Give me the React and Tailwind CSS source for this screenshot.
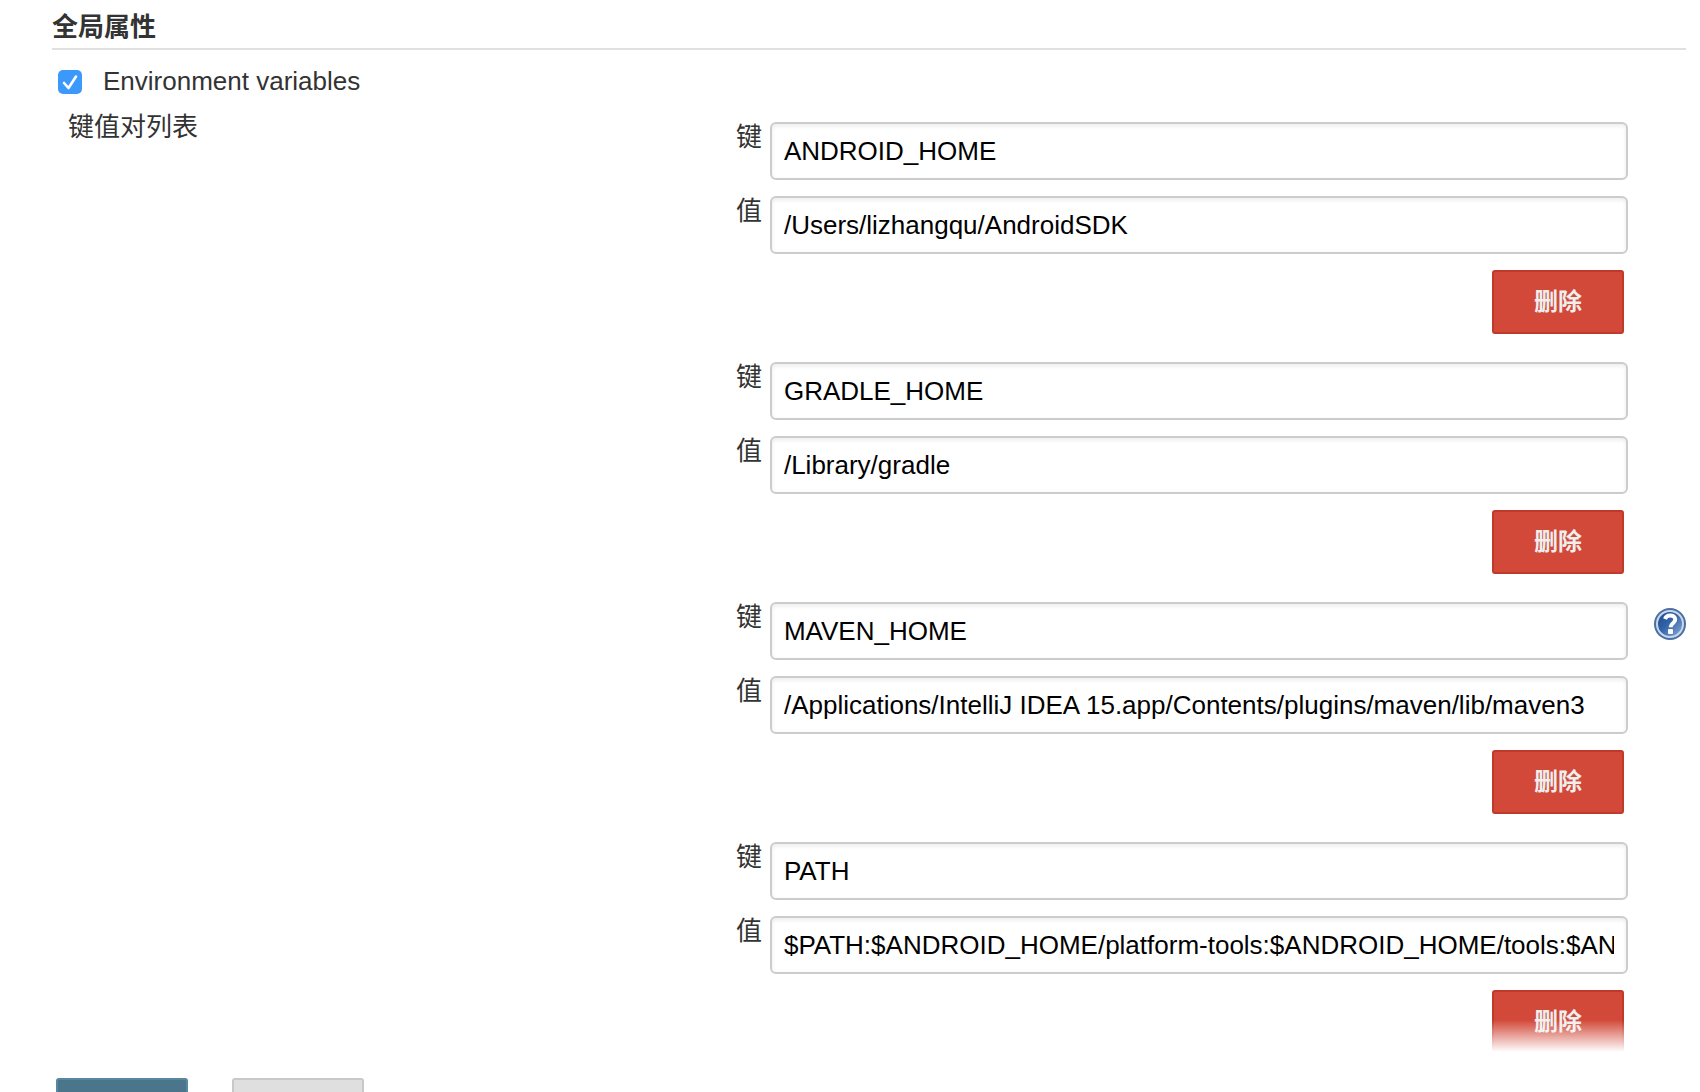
const variables = [
  { key: 'ANDROID_HOME', value: '/Users/lizhangqu/AndroidSDK' },
  { key: 'GRADLE_HOME', value: '/Library/gradle' },
  { key: 'MAVEN_HOME', value: '/Applications/IntelliJ IDEA 15.app/Contents/plugins/maven/lib/maven3' },
  { key: 'PATH', value: '$PATH:$ANDROID_HOME/platform-tools:$ANDROID_HOME/tools:$AN' },
]

function Field({ id, label, value }) {
  return (
    <div className="flex items-start gap-2">
      <label htmlFor={id} className="w-[26px] shrink-0 leading-[30px]">
        {label}
      </label>
      <input
        id={id}
        type="text"
        defaultValue={value}
        className="h-[58px] min-w-0 flex-1 rounded-[6px] border-2 border-[#ccc] bg-white px-3 text-black shadow-[inset_0_2px_4px_rgba(0,0,0,0.08)] outline-none"
      />
    </div>
  )
}

function VariableGroup({ item, index }) {
  return (
    <div className="flex flex-col gap-4 pb-7">
      <Field id={`key-${index}`} label="键" value={item.key} />
      <Field id={`value-${index}`} label="值" value={item.value} />
      <button
        type="button"
        className="mr-1 h-16 w-[132px] self-end rounded-[3px] border-2 border-[#c03a2b] bg-[#d24939] text-[24px] font-bold text-[#eee]"
      >
        删除
      </button>
    </div>
  )
}

function HelpIcon() {
  return (
    <svg viewBox="0 0 32 32" className="size-8" aria-hidden="true">
      <defs>
        <linearGradient id="help-fill" x1="0" y1="0" x2="1" y2="1">
          <stop offset="0" stopColor="#204a87" />
          <stop offset="0.45" stopColor="#3163a8" />
          <stop offset="1" stopColor="#8fb0da" />
        </linearGradient>
      </defs>
      <circle cx="16" cy="16" r="16" fill="#4a6fa5" />
      <circle cx="16" cy="16" r="13" fill="url(#help-fill)" stroke="#c9d7ea" strokeWidth="2" />
      <path
        d="M11 11c.8-2.400 2.700-3.400 5.200-3.400 3 0 5 1.500 5 4 0 3.600-4.600 3.700-4.600 7.600"
        fill="none"
        stroke="#fff"
        strokeWidth="4"
      />
      <rect x="14" y="21" width="5" height="5" rx="1" fill="#fff" />
    </svg>
  )
}

function App() {
  return (
    <div className="flex h-screen flex-col overflow-hidden bg-white font-['Liberation_Sans','Noto_Sans_CJK_SC',sans-serif] text-[26px] text-[#333]">
      <main className="relative min-h-0 flex-1 overflow-hidden pr-3.5 pl-[52px]">
        <h2 className="h-[50px] border-b-2 border-[#e0e0e0] pt-1 leading-[46px] font-bold">全局属性</h2>

        <div className="mt-4 flex h-8 items-start pl-1.5">
          <span className="relative mt-1 size-6">
            <input
              id="env-vars"
              type="checkbox"
              defaultChecked
              className="block size-6 appearance-none rounded-[5px] bg-[#3b99fc]"
            />
            <svg viewBox="0 0 24 24" className="pointer-events-none absolute inset-0 size-6" aria-hidden="true">
              <path
                d="M6 13l4.500 5L18 6.500"
                fill="none"
                stroke="#fff"
                strokeWidth="2.600"
                strokeLinecap="round"
                strokeLinejoin="round"
              />
            </svg>
          </span>
          <label htmlFor="env-vars" className="ml-[21px] leading-[30px]">
            Environment variables
          </label>
        </div>

        <div className="mt-3 grid grid-cols-[23fr_30fr_58px] items-start">
          <h3 className="pl-4 leading-[34px]">键值对列表</h3>
          <div className="min-w-0 pt-3">
            {variables.map((item, index) => (
              <VariableGroup key={item.key} item={item} index={index} />
            ))}
          </div>
          <button type="button" aria-label="Help" className="self-center justify-self-end pt-14">
            <HelpIcon />
          </button>
        </div>

        <div className="pointer-events-none absolute inset-x-0 bottom-0 h-8 bg-linear-to-b from-white/0 to-white" />
      </main>

      {/* save bar, its buttons run past the bottom edge */}
      <footer className="flex h-10 shrink-0 gap-11 overflow-hidden pt-[26px] pl-14">
        <button
          type="button"
          aria-label="Save"
          className="h-16 w-[132px] shrink-0 rounded-[3px] border-2 border-[#5788a1] bg-[#4b758b]"
        />
        <button
          type="button"
          aria-label="Apply"
          className="h-16 w-[132px] shrink-0 rounded-[3px] border-2 border-[#c8c8c8] bg-[#dfdfdf]"
        />
      </footer>
    </div>
  )
}

export default App
